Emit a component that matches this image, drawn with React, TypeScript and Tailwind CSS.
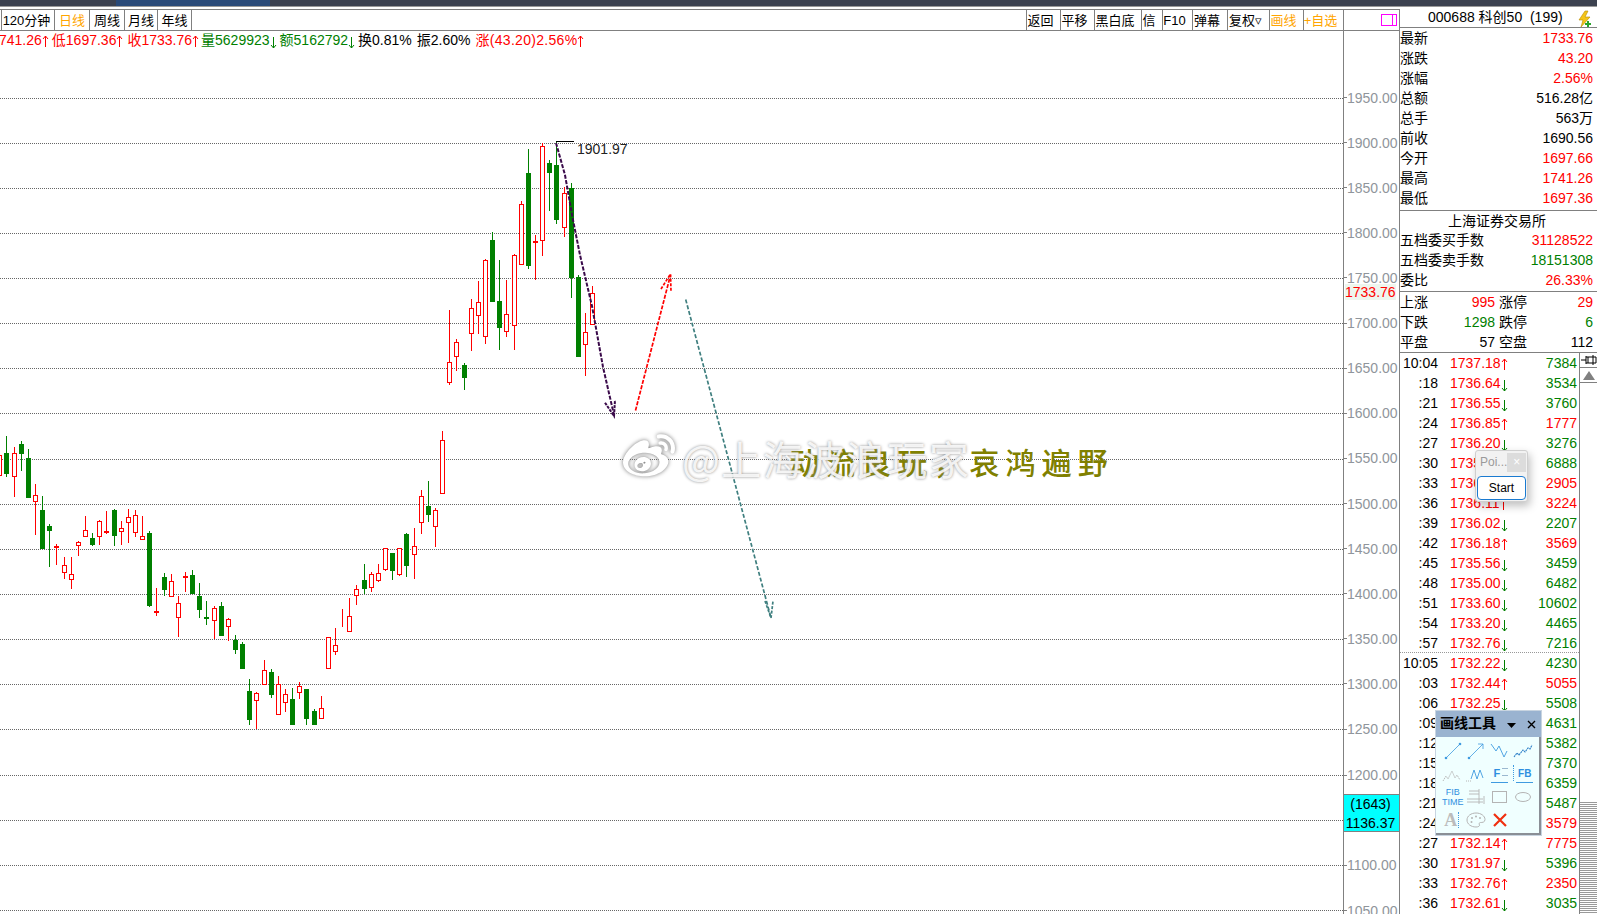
import { FaWeibo } from "react-icons/fa";

type Candle = [number, number, number, number, number, "r" | "g"];

// candle rows as read off the crops: centre x, wick top, wick bottom, body top, body bottom (3x px)
const leftCandles: Candle[] = [
  [-3, 105, 165, 105, 165, "r"], [19, 48, 170, 100, 160, "g"], [43, 82, 230, 100, 168, "r"], [64, 63, 152, 72, 100, "g"],
  [85, 87, 230, 114, 230, "g"], [106, 192, 345, 226, 244, "r"], [127, 228, 388, 270, 383, "g"], [148, 312, 440, 318, 329, "g"],
  [169, 372, 434, 379, 380, "r"], [193, 411, 476, 436, 457, "r"], [214, 411, 506, 463, 478, "r"], [235, 363, 407, 367, 376, "r"],
  [256, 288, 350, 331, 349, "r"], [277, 339, 378, 354, 371, "g"], [298, 300, 374, 304, 349, "r"], [319, 273, 341, 334, 335, "r"],
  [343, 267, 377, 270, 344, "g"], [364, 303, 374, 325, 334, "r"], [385, 267, 368, 292, 307, "r"], [406, 270, 350, 286, 337, "r"],
  [427, 288, 358, 349, 358, "r"], [448, 333, 560, 339, 554, "g"], [469, 503, 587, 574, 575, "r"], [493, 459, 527, 471, 506, "g"],
  [514, 462, 530, 484, 529, "r"], [535, 528, 650, 550, 592, "r"], [556, 456, 515, 469, 472, "r"], [577, 450, 522, 465, 518, "g"],
  [598, 489, 593, 528, 566, "g"], [619, 543, 614, 592, 593, "g"], [643, 558, 658, 565, 601, "r"], [664, 546, 644, 558, 644, "g"],
  [685, 595, 662, 598, 619, "r"],
];

const midCandles: Candle[] = [
  [46, 645, 701, 660, 686, "g"], [67, 666, 746, 672, 743, "g"], [88, 777, 914, 813, 896, "g"], [109, 817, 928, 820, 841, "r"],
  [133, 720, 793, 751, 793, "r"], [154, 747, 833, 756, 821, "g"], [175, 768, 883, 793, 883, "r"], [196, 807, 875, 823, 847, "r"],
  [217, 804, 911, 837, 911, "g"], [238, 786, 838, 799, 817, "r"], [259, 807, 914, 807, 893, "g"], [283, 867, 914, 873, 911, "g"],
  [304, 828, 895, 865, 895, "r"], [325, 652, 745, 652, 745, "r"], [346, 624, 704, 676, 694, "r"], [367, 567, 622, 620, 621, "r"],
  [388, 534, 634, 589, 634, "r"], [409, 495, 554, 508, 526, "r"], [433, 432, 522, 480, 503, "g"], [454, 456, 515, 463, 502, "r"],
  [475, 432, 485, 460, 481, "r"], [496, 385, 452, 385, 448, "r"], [517, 399, 479, 399, 449, "g"], [538, 385, 467, 385, 463, "r"],
  [559, 339, 470, 342, 434, "g"], [583, 324, 476, 379, 403, "r"], [604, 210, 341, 229, 307, "r"], [625, 183, 305, 258, 281, "g"],
  [646, 265, 380, 271, 319, "r"], [667, 33, 220, 61, 220, "r"],
];

const rightCandles: Candle[] = [
  [58, 540, 764, 697, 757, "r"], [79, 628, 722, 637, 679, "r"], [103, 699, 779, 705, 740, "g"], [124, 507, 662, 535, 610, "r"],
  [145, 453, 611, 517, 556, "r"], [166, 387, 641, 391, 619, "r"], [187, 306, 516, 330, 513, "g"], [208, 390, 659, 513, 590, "g"],
  [229, 450, 620, 553, 604, "r"], [253, 373, 659, 376, 586, "r"], [274, 213, 403, 223, 403, "r"], [295, 57, 416, 129, 404, "g"],
  [316, 315, 451, 334, 335, "r"], [337, 40, 377, 48, 331, "r"], [358, 90, 242, 99, 125, "g"], [379, 33, 281, 105, 266, "g"],
  [403, 170, 320, 190, 292, "r"], [424, 159, 503, 174, 440, "g"], [445, 435, 680, 441, 678, "g"], [466, 549, 737, 607, 643, "r"],
  [487, 468, 586, 490, 583, "r"],
];

const place = (ox: number, oy: number, rows: Candle[]): Candle[] =>
  rows.map(([x, a, b, c, d, col]) => [
    Math.floor(ox + x / 3) + 0.5,
    Math.round(oy + a / 3),
    Math.round(oy + b / 3),
    Math.round(oy + c / 3) + 0.5,
    Math.round(oy + d / 3) + 0.5,
    col,
  ]);

const candles = [...place(0, 420, leftCandles), ...place(220, 420, midCandles), ...place(430, 130, rightCandles)];

// the lines step one pixel further from the 1200 level down
const gridYs = Array.from({ length: 19 }, (_, i) => Math.floor(98.3 + 45.09 * i) + (i >= 15 ? 1 : 0) + 0.5);
const axisLabels = Array.from({ length: 19 }, (_, i) => (1950 - i * 50).toFixed(2));

const leftTabs = [
  { label: "120分钟", cls: "w-[53px] pr-[3px] text-black" },
  { label: "日线", cls: "w-[35px] text-[#ffa500]" },
  { label: "周线", cls: "w-[35px] text-black" },
  { label: "月线", cls: "w-[33px] text-black" },
  { label: "年线", cls: "w-[34px] text-black" },
];

const rightTabs = [
  { label: "返回", cls: "w-[34px] text-black" },
  { label: "平移", cls: "w-[34px] text-black" },
  { label: "黑白底", cls: "w-[47px] text-black" },
  { label: "信", cls: "w-[21px] text-black" },
  { label: "F10", cls: "w-[30px] text-black" },
  { label: "弹幕", cls: "w-[35px] text-black" },
  { label: "复权▿", cls: "w-[42px] text-black" },
  { label: "画线", cls: "w-[34px] text-[#ffa500]" },
  { label: "+自选", cls: "w-[40px] text-[#ffa500]" },
];

const stats = [
  ["最新", "1733.76", "text-[#ff0000]"],
  ["涨跌", "43.20", "text-[#ff0000]"],
  ["涨幅", "2.56%", "text-[#ff0000]"],
  ["总额", "516.28亿", "text-black"],
  ["总手", "563万", "text-black"],
  ["前收", "1690.56", "text-black"],
  ["今开", "1697.66", "text-[#ff0000]"],
  ["最高", "1741.26", "text-[#ff0000]"],
  ["最低", "1697.36", "text-[#ff0000]"],
];

const breadth = [
  ["上涨", "995", "text-[#ff0000]", "涨停", "29", "text-[#ff0000]"],
  ["下跌", "1298", "text-[#008000]", "跌停", "6", "text-[#008000]"],
  ["平盘", "57", "text-black", "空盘", "112", "text-black"],
];

type Tick = [string, string, "u" | "d", string, "r" | "g"];

const ticks: Tick[] = [
  ["10:04", "1737.18", "u", "7384", "g"],
  [":18", "1736.64", "d", "3534", "g"],
  [":21", "1736.55", "d", "3760", "g"],
  [":24", "1736.85", "u", "1777", "r"],
  [":27", "1736.20", "d", "3276", "g"],
  [":30", "1735.81", "d", "6888", "g"],
  [":33", "1736.02", "u", "2905", "r"],
  [":36", "1736.11", "u", "3224", "r"],
  [":39", "1736.02", "d", "2207", "g"],
  [":42", "1736.18", "u", "3569", "r"],
  [":45", "1735.56", "d", "3459", "g"],
  [":48", "1735.00", "d", "6482", "g"],
  [":51", "1733.60", "d", "10602", "g"],
  [":54", "1733.20", "d", "4465", "g"],
  [":57", "1732.76", "d", "7216", "g"],
  ["10:05", "1732.22", "d", "4230", "g"],
  [":03", "1732.44", "u", "5055", "r"],
  [":06", "1732.25", "d", "5508", "g"],
  [":09", "1732.20", "d", "4631", "g"],
  [":12", "1732.10", "d", "5382", "g"],
  [":15", "1732.05", "d", "7370", "g"],
  [":18", "1731.98", "d", "6359", "g"],
  [":21", "1731.90", "d", "5487", "g"],
  [":24", "1732.00", "u", "3579", "r"],
  [":27", "1732.14", "u", "7775", "r"],
  [":30", "1731.97", "d", "5396", "g"],
  [":33", "1732.76", "u", "2350", "r"],
  [":36", "1732.61", "d", "3035", "g"],
];

function Arrow({ dir }: { dir: "u" | "d" }) {
  if (dir === "u") {
    return (
      <svg width="7" height="14" viewBox="0 0 7 14" className="shrink-0 translate-y-[1px]">
        <path d="M3.5 13V2M1 5l2.5-3L6 5" fill="none" stroke="#ff0000" />
      </svg>
    );
  }
  return (
    <svg width="7" height="14" viewBox="0 0 7 14" className="shrink-0 translate-y-[3px]">
      <path d="M3.5 1v11M1 9l2.5 3L6 9" fill="none" stroke="#008000" />
    </svg>
  );
}

function Chart() {
  return (
    <svg width="1343" height="864" viewBox="0 50 1343 864" className="block">
      {gridYs.map((y) => (
        <line key={y} x1="0" x2="1343" y1={y} y2={y} stroke="#666" strokeDasharray="1 1" shapeRendering="crispEdges" />
      ))}

      <g shapeRendering="crispEdges">
        {candles.map(([x, wt, wb, bt, bb, col], i) => {
          const color = col === "r" ? "#ff0000" : "#008000";
          return (
            <g key={i}>
              <line x1={x} x2={x} y1={wt} y2={wb} stroke={color} />
              <rect x={x - 2} y={bt} width="4" height={Math.max(bb - bt, 0)} fill={col === "r" ? "#fff" : color} stroke={color} />
            </g>
          );
        })}
      </g>

      {/* high marker */}
      <line x1="556" x2="574" y1="141.5" y2="141.5" stroke="#000" shapeRendering="crispEdges" />
      <text x="577" y="154" fontSize="14" fill="#222">1901.97</text>

      {/* hand drawn arrows */}
      <g fill="none" strokeWidth="1.7">
        <path d="M556 143 L565 175 L573 220 L580 255 L592 306 L603 367 L614 415" stroke="#3a0a4a" strokeDasharray="4 1.5" strokeWidth="2" />
        <path d="M605 402.7 L614 416 L615 400" stroke="#3a0a4a" strokeDasharray="3 1" strokeWidth="2" />
        <path d="M635.5 410.5 L670.5 275" stroke="#ff0000" strokeDasharray="4 1.5" />
        <path d="M661 289 L670.5 274 L671 291.5" stroke="#ff0000" strokeDasharray="3 1.5" />
        <path d="M685.7 299.5 L771 618" stroke="#3f7f7f" strokeDasharray="4 2" />
        <path d="M765 601 L771 618 L773 601" stroke="#3f7f7f" strokeDasharray="3 1.5" />
      </g>
    </svg>
  );
}

function ToolIcon({ children }: { children: React.ReactNode }) {
  return (
    <svg width="22" height="22" viewBox="0 0 22 22" fill="none">
      {children}
    </svg>
  );
}

function LineTools() {
  const blue = "#3f9be0";
  const grey = "#b4b4b4";
  return (
    <div className="grid w-[99px] grid-cols-4 pl-[5px] pt-[2px]">
      <div className="flex h-[23px] w-[23.5px] items-center justify-center">
        <ToolIcon>
          <path d="M4 18 18 4" stroke={blue} strokeWidth="0.8" />
          <circle cx="4" cy="18" r="1.3" fill={blue} />
          <circle cx="18" cy="4" r="1.3" fill={blue} />
        </ToolIcon>
      </div>
      <div className="flex h-[23px] w-[23.5px] items-center justify-center">
        <ToolIcon>
          <path d="M4 18 18 4M13 4h5v5" stroke={blue} strokeWidth="0.8" />
          <circle cx="4" cy="18" r="1.3" fill={blue} />
        </ToolIcon>
      </div>
      <div className="flex h-[23px] w-[23.5px] items-center justify-center">
        <ToolIcon>
          <path d="M2 4l5 7 3-5 5 11 3-6" stroke={blue} strokeWidth="0.9" />
        </ToolIcon>
      </div>
      <div className="flex h-[23px] w-[23.5px] items-center justify-center">
        <ToolIcon>
          <path d="M2 17l3-4 2 2 4-5 2 2 3-4 2 1 2-4" stroke="#2f80c8" strokeWidth="1.1" strokeDasharray="2 0.6" />
        </ToolIcon>
      </div>
      <div className="flex h-[23px] w-[23.5px] items-center justify-center">
        <ToolIcon>
          <path d="M1 18l3-5 2 3 4-8 3 7 2-3 3 5" stroke={grey} strokeWidth="0.9" strokeDasharray="1.5 0.7" />
        </ToolIcon>
      </div>
      <div className="flex h-[23px] w-[23.5px] items-center justify-center">
        <ToolIcon>
          <path d="M6 16l3-9 3 9 3-9 3 8" stroke={blue} strokeWidth="0.9" />
          <path d="M1 18h5" stroke={grey} strokeDasharray="1 1" />
        </ToolIcon>
      </div>
      <div className="relative flex h-[23px] w-[23.5px] items-center justify-center pr-[6px]">
        <span className="text-[11px] font-bold leading-none text-[#2f8fe0]">F</span>
        <span className="absolute bottom-[2px] left-[3px] h-[1px] w-[17px] bg-[#3f9be0]" />
        <span className="absolute left-[14px] top-[6px] h-[8px] w-[6px] border-y border-[#9ab8d0]" />
      </div>
      <div className="relative flex h-[23px] w-[23.5px] items-center justify-center pl-[3px]">
        <span className="text-[10px] font-bold leading-none text-[#2f8fe0]">FB</span>
        <span className="absolute bottom-[2px] left-[4px] h-[1px] w-[17px] bg-[#3f9be0]" />
        <span className="absolute left-[1px] top-[3px] h-[16px] border-l border-dotted border-[#3f9be0]" />
      </div>
      <div className="flex h-[23px] w-[23.5px] flex-col items-center justify-center text-[9px] leading-[10px] text-[#2f8fe0]">
        <span>FIB</span>
        <span>TIME</span>
      </div>
      <div className="flex h-[23px] w-[23.5px] items-center justify-center">
        <ToolIcon>
          <path d="M4 5h10M4 8h10M2 13h16M2 16h16M14 3v15M19 10v8" stroke={grey} strokeWidth="0.9" />
        </ToolIcon>
      </div>
      <div className="flex h-[23px] w-[23.5px] items-center justify-center">
        <ToolIcon>
          <rect x="3.5" y="5.5" width="14" height="11" stroke={grey} />
        </ToolIcon>
      </div>
      <div className="flex h-[23px] w-[23.5px] items-center justify-center">
        <ToolIcon>
          <ellipse cx="11" cy="11" rx="7.5" ry="4.5" stroke={grey} />
        </ToolIcon>
      </div>
      <div className="flex h-[23px] w-[23.5px] items-center justify-center gap-[1px] pr-[2px]">
        <span className="font-['Liberation_Serif',serif] text-[18px] font-bold leading-none text-[#bcbcbc]">A</span>
        <span className="h-[16px] border-l border-dotted border-[#3f9be0]" />
      </div>
      <div className="flex h-[23px] w-[23.5px] items-center justify-center">
        <ToolIcon>
          <path d="M11 4c5 0 9 3 9 6.500 0 3-3 3-4.500 3-1.500 0-1.500 1.500-1 2.500.3 1-1 2-3.500 2C6 18 2 15 2 11s4-7 9-7Z" stroke={grey} />
          <circle cx="7" cy="9" r="1" fill={grey} />
          <circle cx="11" cy="7.500" r="1" fill={grey} />
          <circle cx="15" cy="9" r="1" fill={grey} />
          <circle cx="6.500" cy="13" r="1" fill={grey} />
        </ToolIcon>
      </div>
      <div className="flex h-[23px] w-[23.5px] items-center justify-center">
        <ToolIcon>
          <path d="M5 5l12 12M17 5 5 17" stroke="#f03010" strokeWidth="2.2" />
        </ToolIcon>
      </div>
    </div>
  );
}

export default function App() {
  return (
    <div className="relative flex h-[914px] w-[1597px] flex-col overflow-hidden bg-white font-['Liberation_Sans','Noto_Sans_CJK_SC',sans-serif] text-[14px] leading-none text-black">
      {/* window strip */}
      <div className="flex h-[6px] shrink-0 bg-[#3c4250]">
        <div className="ml-[116px] w-[154px] bg-[#2a4a78]" />
      </div>
      <div className="h-[3px] shrink-0 border-t border-[#9a9a9a] bg-white" />

      <div className="flex min-h-0 flex-1">
        {/* chart column */}
        <div className="flex w-[1399px] shrink-0 flex-col">
          <div className="flex h-[22px] shrink-0 border-y border-[#808080] text-[13px]">
            <div className="w-[1px] shrink-0" />
            {leftTabs.map((t) => (
              <div key={t.label} className={`flex items-center justify-center border-l border-[#808080] ${t.cls}`}>
                {t.label}
              </div>
            ))}
            <div className="flex-1 border-l border-[#808080]" />
            {rightTabs.map((t) => (
              <div key={t.label} className={`flex items-center justify-center whitespace-nowrap border-l border-[#808080] pr-[6px] ${t.cls}`}>
                {t.label}
              </div>
            ))}
            <div className="flex w-[56px] items-center justify-end border-l border-[#808080] pr-[2px]">
              <div className="flex h-[12px] w-[16px] justify-end border border-[#ff00ff]">
                <div className="w-[4px] border-l border-[#ff00ff]" />
              </div>
            </div>
          </div>

          <div className="flex min-h-0 flex-1">
            <div className="flex w-[1343px] shrink-0 flex-col overflow-hidden">
              <div className="ml-[-1px] flex h-[19px] shrink-0 items-center whitespace-nowrap pb-[2px] text-[#ff0000]">
                <span>741.26</span>
                <Arrow dir="u" />
                <span className="ml-[3px]">低1697.36</span>
                <Arrow dir="u" />
                <span className="ml-[4px]">收1733.76</span>
                <Arrow dir="u" />
                <span className="ml-[2px] text-[#008000]">量5629923</span>
                <Arrow dir="d" />
                <span className="ml-[3px] text-[#008000]">额5162792</span>
                <Arrow dir="d" />
                <span className="ml-[3px] text-black">换0.81%</span>
                <span className="ml-[5px] text-black">振2.60%</span>
                <span className="ml-[5px] tracking-[0.3px]">涨(43.20)2.56%</span>
                <Arrow dir="u" />
              </div>
              <Chart />
            </div>

            {/* price axis */}
            <div className="relative flex w-[56px] shrink-0 flex-col overflow-hidden border-l border-[#808080] pt-[44px] text-[#8f959b]">
              {axisLabels.map((l, i) => (
                <div key={l} className={`flex h-[45.12px] shrink-0 items-center ${i === 15 ? "mt-[1px]" : ""}`}>
                  <span className="h-[1px] w-[3px] shrink-0 bg-[#808080]" />
                  <span>{l}</span>
                </div>
              ))}
              <div className="absolute left-[1px] top-[253px] flex h-[16px] items-center bg-[#eef6ee] text-[#ff0000]">1733.76</div>
              <div className="absolute left-[-1px] top-[763px] flex h-[38px] w-[57px] flex-col items-center justify-center gap-[5px] border border-[#808080] bg-[#00ffff] pr-[2px] text-black">
                <span>(1643)</span>
                <span>1136.37</span>
              </div>
            </div>
          </div>
        </div>

        {/* quote panel */}
        <div className="flex w-[198px] shrink-0 flex-col border-l border-[#808080]">
          <div className="relative flex h-[19px] shrink-0 items-center whitespace-pre border-b border-[#808080] pb-[2px] pl-[28px]">
            <span>000688 科创50  (199)</span>
            <svg width="17" height="18" viewBox="0 0 17 18" className="absolute right-[4px] top-[1px]">
              <path d="M9 1 3 10h4l-2 7 9-10H9l3-6Z" fill="#f5c518" stroke="#b58a00" strokeWidth="0.6" />
              <path d="M12 11v6M9 14h6" stroke="#2aa52a" strokeWidth="2" />
            </svg>
          </div>

          <div className="shrink-0 border-b border-[#808080] pb-[2px]">
            {stats.map(([k, v, c]) => (
              <div key={k} className="flex h-[20px] items-center justify-between pr-[4px]">
                <span>{k}</span>
                <span className={c}>{v}</span>
              </div>
            ))}
          </div>

          <div className="shrink-0 border-b border-[#808080] pb-[1px]">
            <div className="flex h-[19px] items-center justify-center pr-[3px] pt-[1px]">上海证券交易所</div>
            <div className="flex h-[20px] items-center justify-between pr-[4px]">
              <span>五档委买手数</span>
              <span className="text-[#ff0000]">31128522</span>
            </div>
            <div className="flex h-[20px] items-center justify-between pr-[4px]">
              <span>五档委卖手数</span>
              <span className="text-[#008000]">18151308</span>
            </div>
            <div className="flex h-[20px] items-center justify-between pr-[4px]">
              <span>委比</span>
              <span className="text-[#ff0000]">26.33%</span>
            </div>
          </div>

          <div className="shrink-0 border-b border-[#808080]">
            {breadth.map(([a, av, ac, b, bv, bc]) => (
              <div key={a} className="flex h-[20px] items-center pr-[4px]">
                <div className="flex w-[95px] justify-between">
                  <span>{a}</span>
                  <span className={ac}>{av}</span>
                </div>
                <div className="ml-[4px] flex flex-1 justify-between">
                  <span>{b}</span>
                  <span className={bc}>{bv}</span>
                </div>
              </div>
            ))}
          </div>

          <div className="flex min-h-0 flex-1">
            <div className="flex min-w-0 flex-1 flex-col overflow-hidden">
              {ticks.map(([t, p, d, v, c], i) => (
                <div
                  key={i}
                  className={`flex h-[20px] shrink-0 items-center ${i === 14 ? "border-b border-dotted border-[#999]" : ""}`}
                >
                  <span className="w-[38px] shrink-0 text-right">{t}</span>
                  <span className="ml-[12px] text-[#ff0000]">{p}</span>
                  <Arrow dir={d} />
                  <span className={`flex-1 pr-[2px] text-right ${c === "r" ? "text-[#ff0000]" : "text-[#008000]"}`}>{v}</span>
                </div>
              ))}
            </div>
            <div className="flex w-[18px] shrink-0 flex-col border-l border-[#808080]">
              <div className="flex h-[15px] shrink-0 items-center justify-center border-b border-[#808080]">
                <svg width="16" height="12" viewBox="0 0 16 12">
                  <path d="M0 6h5M5 2v8M12 1v10M5 3h7M5 9h7M7 3v6" stroke="#000" fill="none" />
                  <path d="M12 3h3v6h-3" stroke="#000" fill="none" />
                </svg>
              </div>
              <div className="flex h-[15px] shrink-0 items-center justify-center border-b border-[#808080]">
                <svg width="12" height="9" viewBox="0 0 12 9">
                  <path d="M6 0 12 9H0Z" fill="#808080" />
                </svg>
              </div>
              <div className="flex-1" />
              <div className="h-[112px] shrink-0 bg-[repeating-linear-gradient(to_bottom,#9a9a9a_0px,#9a9a9a_1px,#ffffff_1px,#ffffff_2px)]" />
            </div>
          </div>
        </div>
      </div>

      {/* watermark */}
      <div className="pointer-events-none absolute left-[789px] top-[444px] whitespace-nowrap font-['Noto_Sans_CJK_SC',sans-serif] text-[30px] font-medium leading-[34px] tracking-[6.1px] text-[#808000]">
        动流良玩，哀鸿遍野
      </div>
      <FaWeibo className="pointer-events-none absolute left-[623px] top-[431px] h-[52px] w-[52px] text-white drop-shadow-[0_0_2px_#777]" />
      <div className="pointer-events-none absolute left-[682px] top-[435px] whitespace-nowrap font-['Noto_Sans_CJK_SC',sans-serif] text-[40px] leading-[46px] tracking-[1.5px] text-white/85 [text-shadow:0_0_3px_#8a8a8a]">
        @上海波浪玩家
      </div>

      {/* floating recorder box */}
      <div className="absolute left-[1475px] top-[450px] flex h-[52px] w-[53px] flex-col rounded-[3px] border border-[#cfcfcf] bg-[#f2f2f2] shadow-[2px_4px_8px_rgba(0,0,0,0.25)]">
        <div className="flex h-[22px] shrink-0 items-center justify-between pl-[4px] text-[12px] text-[#9a9a9a]">
          <span>Poi...</span>
          <span className="mr-[1px] flex h-[19px] w-[19px] items-center justify-center bg-[#dcdcdc] text-white">×</span>
        </div>
        <div className="mx-[1px] mt-[3px] flex h-[24px] items-center justify-center rounded-[4px] border-[1.5px] border-[#1a7ad0] bg-white text-[12px] text-black">
          Start
        </div>
      </div>

      {/* line tools palette */}
      <div className="absolute left-[1435px] top-[710px] h-[126px] w-[107px] border border-[#c8d4e0] bg-[#f0ffff] shadow-[inset_-2px_-2px_0_#8a8f96]">
        <div className="flex h-[26px] items-center bg-[#9ab3d0] pb-[1px] pl-[4px] pr-[5px]">
          <span className="mb-[1px] shrink-0 whitespace-nowrap font-bold">画线工具</span>
          <svg width="9" height="5" viewBox="0 0 9 5" className="ml-[11px] mt-[3px] shrink-0">
            <path d="M0 0h9L4.500 5Z" fill="#000" />
          </svg>
          <svg width="9" height="9" viewBox="0 0 9 9" className="ml-[11px] mt-[2px] shrink-0">
            <path d="M1 1l7 7M8 1 1 8" stroke="#000" strokeWidth="1.4" />
          </svg>
        </div>
        <LineTools />
      </div>
    </div>
  );
}
